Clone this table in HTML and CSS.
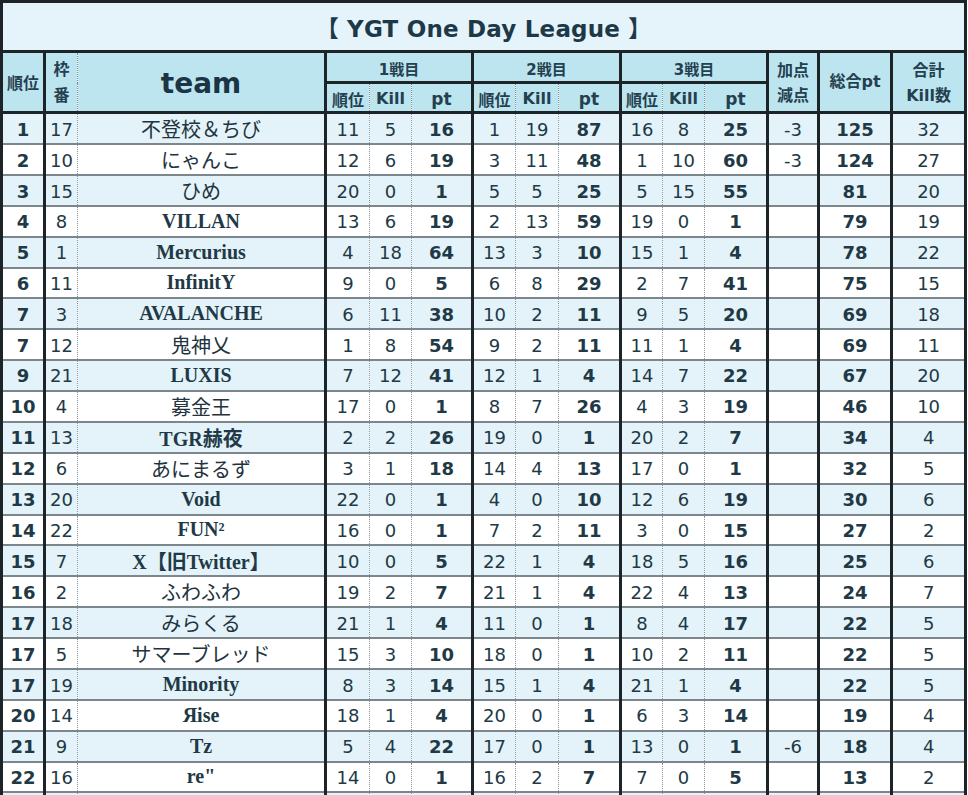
FILE: index.html
```html
<!DOCTYPE html>
<html lang="ja">
<head>
<meta charset="utf-8">
<title>YGT One Day League</title>
<link rel="stylesheet" href="styles.css">
</head>
<body>
<table class="board">
  <colgroup>
    <col class="w-rank"><col class="w-slot"><col class="w-team">
    <col class="w-r1"><col class="w-k1"><col class="w-p1">
    <col class="w-r2"><col class="w-k2"><col class="w-p2">
    <col class="w-r3"><col class="w-k3"><col class="w-p3">
    <col class="w-adj"><col class="w-total"><col class="w-kills">
  </colgroup>
  <thead>
    <tr class="title-row"><th colspan="15" class="title">【 YGT One Day League 】</th></tr>
    <tr class="head-a">
      <th rowspan="2" class="h h-rank">順位</th>
      <th rowspan="2" class="h h-slot">枠<br>番</th>
      <th rowspan="2" class="h h-team">team</th>
      <th colspan="3" class="h h-game">1戦目</th>
      <th colspan="3" class="h h-game">2戦目</th>
      <th colspan="3" class="h h-game">3戦目</th>
      <th rowspan="2" class="h h-two">加点<br>減点</th>
      <th rowspan="2" class="h h-total">総合pt</th>
      <th rowspan="2" class="h h-two">合計<br>Kill数</th>
    </tr>
    <tr class="head-b">
      <th class="h s s-first">順位</th><th class="h s">Kill</th><th class="h s s-pt">pt</th>
      <th class="h s s-first">順位</th><th class="h s">Kill</th><th class="h s s-pt">pt</th>
      <th class="h s s-first">順位</th><th class="h s">Kill</th><th class="h s s-pt">pt</th>
    </tr>
  </thead>
  <tbody>
    <tr><td>1</td><td>17</td><td class="jp">不登校＆ちび</td><td>11</td><td>5</td><td>16</td><td>1</td><td>19</td><td>87</td><td>16</td><td>8</td><td>25</td><td>-3</td><td>125</td><td>32</td></tr>
    <tr><td>2</td><td>10</td><td class="jp">にゃんこ</td><td>12</td><td>6</td><td>19</td><td>3</td><td>11</td><td>48</td><td>1</td><td>10</td><td>60</td><td>-3</td><td>124</td><td>27</td></tr>
    <tr><td>3</td><td>15</td><td class="jp">ひめ</td><td>20</td><td>0</td><td>1</td><td>5</td><td>5</td><td>25</td><td>5</td><td>15</td><td>55</td><td></td><td>81</td><td>20</td></tr>
    <tr><td>4</td><td>8</td><td>VILLAN</td><td>13</td><td>6</td><td>19</td><td>2</td><td>13</td><td>59</td><td>19</td><td>0</td><td>1</td><td></td><td>79</td><td>19</td></tr>
    <tr><td>5</td><td>1</td><td>Mercurius</td><td>4</td><td>18</td><td>64</td><td>13</td><td>3</td><td>10</td><td>15</td><td>1</td><td>4</td><td></td><td>78</td><td>22</td></tr>
    <tr><td>6</td><td>11</td><td>InfinitY</td><td>9</td><td>0</td><td>5</td><td>6</td><td>8</td><td>29</td><td>2</td><td>7</td><td>41</td><td></td><td>75</td><td>15</td></tr>
    <tr><td>7</td><td>3</td><td>AVALANCHE</td><td>6</td><td>11</td><td>38</td><td>10</td><td>2</td><td>11</td><td>9</td><td>5</td><td>20</td><td></td><td>69</td><td>18</td></tr>
    <tr><td>7</td><td>12</td><td class="jp">鬼神乂</td><td>1</td><td>8</td><td>54</td><td>9</td><td>2</td><td>11</td><td>11</td><td>1</td><td>4</td><td></td><td>69</td><td>11</td></tr>
    <tr><td>9</td><td>21</td><td>LUXIS</td><td>7</td><td>12</td><td>41</td><td>12</td><td>1</td><td>4</td><td>14</td><td>7</td><td>22</td><td></td><td>67</td><td>20</td></tr>
    <tr><td>10</td><td>4</td><td class="jp">募金王</td><td>17</td><td>0</td><td>1</td><td>8</td><td>7</td><td>26</td><td>4</td><td>3</td><td>19</td><td></td><td>46</td><td>10</td></tr>
    <tr><td>11</td><td>13</td><td>TGR赫夜</td><td>2</td><td>2</td><td>26</td><td>19</td><td>0</td><td>1</td><td>20</td><td>2</td><td>7</td><td></td><td>34</td><td>4</td></tr>
    <tr><td>12</td><td>6</td><td class="jp">あにまるず</td><td>3</td><td>1</td><td>18</td><td>14</td><td>4</td><td>13</td><td>17</td><td>0</td><td>1</td><td></td><td>32</td><td>5</td></tr>
    <tr><td>13</td><td>20</td><td>Void</td><td>22</td><td>0</td><td>1</td><td>4</td><td>0</td><td>10</td><td>12</td><td>6</td><td>19</td><td></td><td>30</td><td>6</td></tr>
    <tr><td>14</td><td>22</td><td>FUN²</td><td>16</td><td>0</td><td>1</td><td>7</td><td>2</td><td>11</td><td>3</td><td>0</td><td>15</td><td></td><td>27</td><td>2</td></tr>
    <tr><td>15</td><td>7</td><td>X【旧Twitter】</td><td>10</td><td>0</td><td>5</td><td>22</td><td>1</td><td>4</td><td>18</td><td>5</td><td>16</td><td></td><td>25</td><td>6</td></tr>
    <tr><td>16</td><td>2</td><td class="jp">ふわふわ</td><td>19</td><td>2</td><td>7</td><td>21</td><td>1</td><td>4</td><td>22</td><td>4</td><td>13</td><td></td><td>24</td><td>7</td></tr>
    <tr><td>17</td><td>18</td><td class="jp">みらくる</td><td>21</td><td>1</td><td>4</td><td>11</td><td>0</td><td>1</td><td>8</td><td>4</td><td>17</td><td></td><td>22</td><td>5</td></tr>
    <tr><td>17</td><td>5</td><td class="jp">サマーブレッド</td><td>15</td><td>3</td><td>10</td><td>18</td><td>0</td><td>1</td><td>10</td><td>2</td><td>11</td><td></td><td>22</td><td>5</td></tr>
    <tr><td>17</td><td>19</td><td>Minority</td><td>8</td><td>3</td><td>14</td><td>15</td><td>1</td><td>4</td><td>21</td><td>1</td><td>4</td><td></td><td>22</td><td>5</td></tr>
    <tr><td>20</td><td>14</td><td>Яise</td><td>18</td><td>1</td><td>4</td><td>20</td><td>0</td><td>1</td><td>6</td><td>3</td><td>14</td><td></td><td>19</td><td>4</td></tr>
    <tr><td>21</td><td>9</td><td>Tz</td><td>5</td><td>4</td><td>22</td><td>17</td><td>0</td><td>1</td><td>13</td><td>0</td><td>1</td><td>-6</td><td>18</td><td>4</td></tr>
    <tr><td>22</td><td>16</td><td>re"</td><td>14</td><td>0</td><td>1</td><td>16</td><td>2</td><td>7</td><td>7</td><td>0</td><td>5</td><td></td><td>13</td><td>2</td></tr>
    <tr><td></td><td></td><td></td><td></td><td></td><td></td><td></td><td></td><td></td><td></td><td></td><td></td><td></td><td></td><td></td></tr>
  </tbody>
</table>
</body>
</html>
```

FILE: styles.css
```css
html, body {
  margin: 0;
  padding: 0;
  background: #ffffff;
  overflow: hidden;
}

.board {
  border-collapse: collapse;
  table-layout: fixed;
  width: 964px;
  margin: 0;
  border: 3px solid #1c2428;
  color: #1c3443;
  font-family: "DejaVu Sans", "Noto Sans CJK JP", sans-serif;
}

.w-rank { width: 43px; }
.w-slot { width: 33px; }
.w-team { width: 248px; }
.w-r1 { width: 44px; }
.w-k1 { width: 42px; }
.w-p1 { width: 61px; }
.w-r2 { width: 43px; }
.w-k2 { width: 43px; }
.w-p2 { width: 62px; }
.w-r3 { width: 42px; }
.w-k3 { width: 42px; }
.w-p3 { width: 63px; }
.w-adj { width: 51px; }
.w-total { width: 73px; }
.w-kills { width: 74px; }

th, td {
  padding: 0;
  text-align: center;
  vertical-align: middle;
  white-space: nowrap;
  overflow: hidden;
}

/* title band */
.title-row { height: 50px; }
.title {
  background: #e5f4fa;
  border-bottom: 3px solid #1c2428;
  font-size: 23px;
  font-weight: bold;
  color: #1d3948;
  letter-spacing: 0.2px;
  padding-top: 1px;
}

/* header cells */
.h {
  background: #bde5f0;
  color: #24404f;
  font-weight: bold;
  font-size: 16px;
  border: 3px solid #1c2428;
}
.head-a { height: 31px; }
.head-b { height: 30px; }
.h-slot {
  line-height: 26px;
  border-right: 1px dotted #7e8e97;
  padding-top: 2px;
}
.h-team {
  font-size: 28px;
  color: #1c3443;
  border-left: 1px dotted #7e8e97;
  padding-top: 2px;
}
.h-game { font-size: 15px; padding-top: 2px; }
.h-two { line-height: 25px; padding-top: 1px; }
.h-total { padding-bottom: 4px; }

.s {
  border-left: 1px dotted #7e8e97;
  border-right: 1px dotted #7e8e97;
  padding-top: 2px;
}
.s-first { border-left: 3px solid #1c2428; }
.s-pt { border-right: 3px solid #1c2428; font-size: 17px; }

/* data rows */
tbody tr { height: 30.75px; }
tbody tr:nth-child(odd) { background: #e4f3f9; }
tbody tr:nth-child(even) { background: #ffffff; }

tbody td {
  font-size: 18px;
  border-top: 2px solid #7c878d;
  border-bottom: 2px solid #7c878d;
  border-left: 1px dotted #8795a0;
  border-right: 1px dotted #8795a0;
  color: #213946;
  padding-top: 1px;
}

tbody td:nth-child(1) {
  font-weight: bold;
  border-right: 3px solid #1c2428;
}
tbody td:nth-child(2) { border-left: 3px solid #1c2428; }
tbody td:nth-child(3) {
  font-family: "Liberation Serif", "Noto Sans CJK JP", serif;
  font-weight: bold;
  font-size: 20px;
  border-right: 3px solid #1c2428;
  padding-top: 0;
}
tbody td.jp {
  font-weight: normal;
  font-size: 20px;
  color: #22333d;
}
tbody td:nth-child(4),
tbody td:nth-child(7),
tbody td:nth-child(10),
tbody td:nth-child(13),
tbody td:nth-child(14),
tbody td:nth-child(15) { border-left: 3px solid #1c2428; }

tbody td:nth-child(6),
tbody td:nth-child(9),
tbody td:nth-child(12),
tbody td:nth-child(14) {
  font-weight: bold;
  border-right: 3px solid #1c2428;
}
tbody td:nth-child(13) { border-right: 3px solid #1c2428; }
tbody td:nth-child(15) { border-right: 3px solid #1c2428; }
```
